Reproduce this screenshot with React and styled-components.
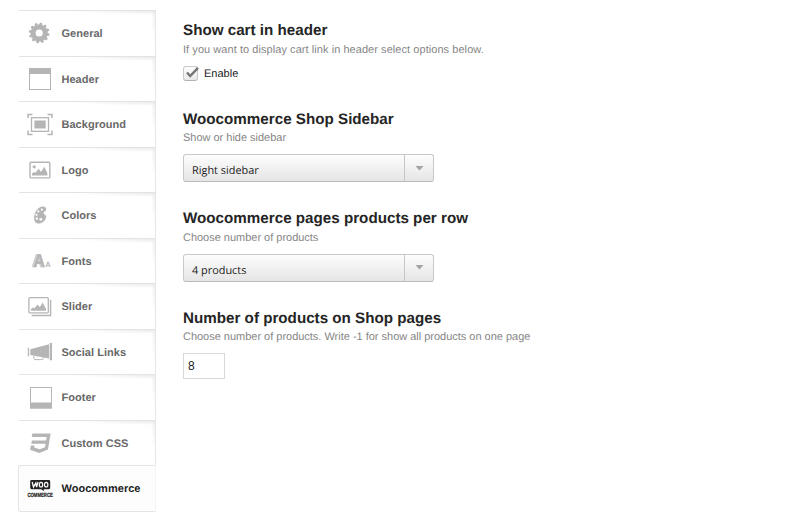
import React from 'react';
import styled, { createGlobalStyle } from 'styled-components';

const GlobalStyle = createGlobalStyle`
  * { box-sizing: border-box; }
  body {
    margin: 0;
    background: #fff;
    font-family: "Liberation Sans", Arial, sans-serif;
    text-rendering: geometricPrecision;
  }
`;

const Page = styled.div`
  display: flex;
  width: 790px;
  height: 530px;
  padding-top: 10px;
  overflow: hidden;
`;

const Sidebar = styled.nav`
  width: 138px;
  margin-left: 18px;
  flex: none;
`;

const Tab = styled.a`
  display: flex;
  align-items: center;
  height: 45.55px;
  font-size: 11px;
  font-weight: bold;
  color: ${(p) => (p.$active ? '#222' : '#686868')};
  ${(p) =>
    p.$active
      ? `
    padding-left: 7px;
    border: 1px solid #e4e4e4;
    border-right-color: #f4f4f4;
    border-radius: 3px 0 0 3px;
    background: #fdfdfd;
    height: 46.5px;
  `
      : `
    margin-left: 1px;
    padding-left: 7px;
    border-top: 1px solid #e3e3e3;
    border-right: 1px solid #e6e6e6;
    background:
      radial-gradient(ellipse 80px 4px at 100% 0, #ebebeb, rgba(255,255,255,0)),
      radial-gradient(ellipse 4px 32px at 100% 0, #efefef, rgba(255,255,255,0)),
      #fff;
  `}
`;

const Icon = styled.svg`
  width: 28px;
  height: 28px;
  flex: none;
  overflow: visible;
  fill: #b5b5b5;
  color: #b5b5b5;
`;

const ShadedLetter = styled.text`
  filter: drop-shadow(-1.5px 0 0 #cfcfcf);
`;

const TabLabel = styled.span`
  margin-left: 7.5px;
  padding-top: 1.4px;
  line-height: 14px;
  letter-spacing: 0.03px;
  white-space: nowrap;
`;

const Options = styled.main`
  margin-left: 27px;
  padding-top: 11px;
`;

const Option = styled.section`
  height: ${(p) => p.$height}px;
`;

const Title = styled.h3`
  margin: 0;
  font-size: 15.2px;
  line-height: 20px;
  color: #252525;
  white-space: nowrap;
`;

const Hint = styled.p`
  margin: 0.5px 0 0;
  font-size: 10.97px;
  line-height: 16px;
  letter-spacing: ${(p) => p.$tracking || 0}px;
  color: #868686;
  white-space: nowrap;
`;

const CheckLabel = styled.label`
  display: flex;
  align-items: flex-start;
  gap: 6px;
  margin-top: 8px;
  height: 17px;
  font-size: 11px;
  line-height: 17px;
  color: #222;
`;

const CheckBox = styled.span`
  display: block;
  width: 15px;
  height: 15px;
  border: 1px solid #c9c9c9;
  border-bottom-color: #b2b2b2;
  border-radius: 3px;
  background: linear-gradient(#fff, #e8e8e8);
  svg { display: block; overflow: visible; }
`;

const Select = styled.div`
  display: flex;
  width: 251px;
  height: 28px;
  margin-top: 8px;
  border: 1px solid #c9c9c9;
  border-bottom-color: #bababa;
  border-radius: 3px;
  background: linear-gradient(#fdfdfd, #e5e5e5);
`;

const SelectValue = styled.span`
  flex: 1;
  padding: 4px 0 0 8px;
  font: 10.9px/23px "Open Sans", sans-serif;
  color: #1c1c1c;
`;

const SelectArrow = styled.span`
  display: flex;
  align-items: center;
  justify-content: center;
  width: 29px;
  border-left: 1px solid #c6c6c6;
`;

const NumberField = styled.input`
  display: block;
  width: 42px;
  height: 26px;
  margin: 8px 0 0;
  padding: 0 0 0 4px;
  border: 1px solid #d9d9d9;
  border-radius: 0;
  background: #fff;
  font: 12px "Liberation Sans", Arial, sans-serif;
  color: #1c1c1c;
  outline: none;
`;

const gearTeeth = Array.from({ length: 12 }, (_, i) => i * 30);

const icons = {
  gear: (
    <>
      <circle cx="13.2" cy="14" r="6.1" fill="none" stroke="currentColor" strokeWidth="5" />
      {gearTeeth.map((a) => (
        <path key={a} d="M11.5 6.2 L12.1 3.7 H14.3 L14.9 6.2z" transform={`rotate(${a + 10} 13.2 14)`} />
      ))}
    </>
  ),
  header: (
    <>
      <rect x="3.5" y="3.5" width="21" height="21" fill="#fff" stroke="currentColor" />
      <path d="M3 3h22v6H3z" />
    </>
  ),
  background: (
    <>
      <path d="M2 8V4.6h4.5M21.5 4.6H26V8M26 20.5v3.9h-4.5M6.5 24.4H2v-3.9" fill="none" stroke="currentColor" strokeWidth="1.5" />
      <rect x="5.5" y="7.7" width="17" height="13.6" fill="none" stroke="currentColor" strokeWidth="1.3" />
      <path d="M8.4 10.5h11.3V18.5H8.4z" />
    </>
  ),
  image: (
    <>
      <rect x="4" y="6.3" width="19.8" height="15.6" rx="1" fill="none" stroke="currentColor" strokeWidth="1.4" />
      <circle cx="8.2" cy="10.8" r="1.6" />
      <path d="M6 19.5v-2l2.2-1.6 1.2.8 3.3-4 2 3 1.3-1.3 2.3-3.7 3.1 6.6v2.2z" />
    </>
  ),
  palette: (
    <>
      <path d="M17.5 5.6c2 .4 3 1.8 2.7 3.1-.3 1.7-2.5 1.8-2.6 3.2 0 1.7 2.5 1.4 2.6 3.5 0 3.7-4 7.1-7.7 7.1-3 0-4.8-2.6-4.4-6.3.6-5.9 4.8-11.3 9.4-10.6z" />
      <g fill="#fff">
        <circle cx="15.9" cy="8.6" r="1.1" />
        <circle cx="12.3" cy="10.4" r="1.1" />
        <circle cx="10.4" cy="13.8" r="1.1" />
        <circle cx="10.8" cy="17.5" r="1.2" />
        <circle cx="14.8" cy="18.3" r="1.4" />
      </g>
    </>
  ),
  fonts: (
    <g fontFamily="Liberation Sans" fontWeight="bold">
      <ShadedLetter x="7.6" y="20.3" fontSize="18.5" stroke="currentColor" strokeWidth=".4" textLength="11.6" lengthAdjust="spacingAndGlyphs">A</ShadedLetter>
      <text x="19.3" y="20.3" fontSize="7.5">A</text>
    </g>
  ),
  slider: (
    <>
      <path d="M24.6 6.8v15.7H5.6" fill="none" stroke="currentColor" strokeWidth="1.4" />
      <rect x="2.9" y="4.7" width="19.4" height="15.2" rx="1" fill="none" stroke="currentColor" strokeWidth="1.3" />
      <path d="M5 17.7V16l2-1.6 1.5.8 3-3.8 2 2.6 1.2-1.2 2-3.3 3.3 6.5v1.7z" />
    </>
  ),
  megaphone: (
    <>
      <path d="M1.8 9.7h1.3v8.5H1.8zM4.3 11.2 23 6.3v14.3L4.3 16.9zM23.7 5H26v17.3h-2.3z" />
      <path d="M7.8 18v2.2q0 1.4 1.4 1.4h6.6q1.4 0 1.4-1.4v-1" fill="none" stroke="currentColor" />
    </>
  ),
  footer: (
    <>
      <rect x="4.5" y="3.5" width="21" height="20.5" fill="#fff" stroke="currentColor" />
      <path d="M4 18.5h22v6H4z" />
    </>
  ),
  css: (
    <path d="M6.4 4.5H24.6L22 20.4 13.2 24 4 20.8l.9-4.2h3.5l-.3 1.8 5.7 1.8 5.2-1.9.6-3.6H5.3l.6-3.1h14.2l.5-3.6H5.7z" />
  ),
  woo: (
    <>
      <path d="M5.6 5h17.2q1.4 0 1.4 1.4v6.4q0 1.4-1.4 1.4h-5.2l.8 2-3.4-2H5.6q-1.4 0-1.4-1.4V6.4Q4.2 5 5.6 5z" fill="#222" />
      <path d="m6.2 7 1.3 5 2.3-4 .8 4L12 7" fill="none" stroke="#fff" strokeWidth="1.3" />
      <ellipse cx="15" cy="9.7" rx="1.7" ry="2.3" fill="none" stroke="#fff" strokeWidth="1.2" />
      <ellipse cx="20.2" cy="9.7" rx="1.7" ry="2.3" fill="none" stroke="#fff" strokeWidth="1.2" />
      <text x="1.4" y="22.4" fontSize="6" fontFamily="Liberation Sans" fontWeight="bold" fill="#222" stroke="#222" strokeWidth=".2" textLength="25.5" lengthAdjust="spacingAndGlyphs">COMMERCE</text>
    </>
  ),
};

const tabs = [
  ['General', 'gear'],
  ['Header', 'header'],
  ['Background', 'background'],
  ['Logo', 'image'],
  ['Colors', 'palette'],
  ['Fonts', 'fonts'],
  ['Slider', 'slider'],
  ['Social Links', 'megaphone'],
  ['Footer', 'footer'],
  ['Custom CSS', 'css'],
  ['Woocommerce', 'woo'],
];

function Dropdown({ value }) {
  return (
    <Select>
      <SelectValue>{value}</SelectValue>
      <SelectArrow>
        <svg width="9" height="5" viewBox="0 0 9 5">
          <path d="M.5 0h8l-4 4.5z" fill="#a3a3a3" />
        </svg>
      </SelectArrow>
    </Select>
  );
}

export default function App() {
  return (
    <Page>
      <GlobalStyle />
      <Sidebar>
        {tabs.map(([label, icon]) => (
          <Tab key={label} $active={icon === 'woo'}>
            <Icon viewBox="0 0 28 28">{icons[icon]}</Icon>
            <TabLabel>{label}</TabLabel>
          </Tab>
        ))}
      </Sidebar>
      <Options>
        <Option $height={88.5}>
          <Title>Show cart in header</Title>
          <Hint $tracking={0.07}>If you want to display cart link in header select options below.</Hint>
          <CheckLabel>
            <CheckBox>
              <svg width="14" height="13" viewBox="0 0 14 13">
                <path d="M3 5.5 6.2 9 14 .8" fill="none" stroke="#777" strokeWidth="2.5" />
              </svg>
            </CheckBox>
            Enable
          </CheckLabel>
        </Option>
        <Option $height={99.5}>
          <Title>Woocommerce Shop Sidebar</Title>
          <Hint>Show or hide sidebar</Hint>
          <Dropdown value="Right sidebar" />
        </Option>
        <Option $height={99.5}>
          <Title>Woocommerce pages products per row</Title>
          <Hint>Choose number of products</Hint>
          <Dropdown value="4 products" />
        </Option>
        <Option $height={90}>
          <Title>Number of products on Shop pages</Title>
          <Hint>Choose number of products. Write -1 for show all products on one page</Hint>
          <NumberField defaultValue="8" />
        </Option>
      </Options>
    </Page>
  );
}
